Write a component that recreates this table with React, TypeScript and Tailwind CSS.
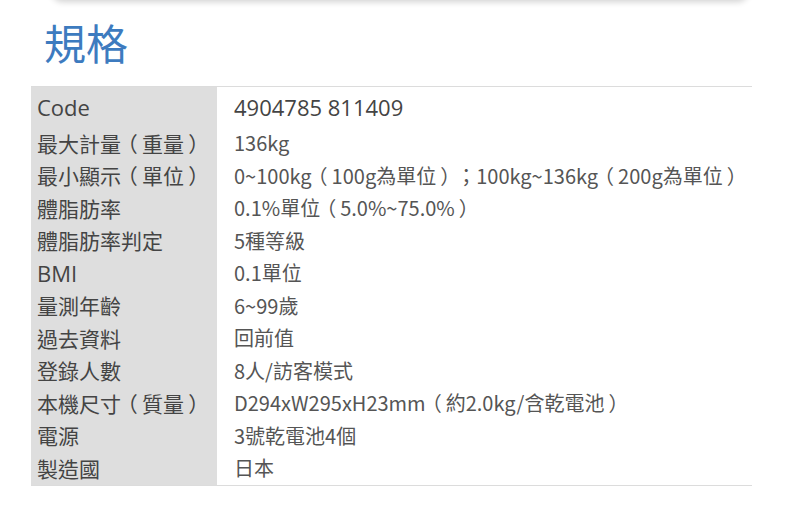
const specs: [string, string][] = [
  ["最大計量（重量）", "136kg"],
  ["最小顯示（單位）", "0~100kg（100g為單位）；100kg~136kg（200g為單位）"],
  ["體脂肪率", "0.1%單位（5.0%~75.0%）"],
  ["體脂肪率判定", "5種等級"],
  ["BMI", "0.1單位"],
  ["量測年齡", "6~99歲"],
  ["過去資料", "回前值"],
  ["登錄人數", "8人/訪客模式"],
  ["本機尺寸（質量）", "D294xW295xH23mm（約2.0kg/含乾電池）"],
  ["電源", "3號乾電池4個"],
  ["製造國", "日本"],
];

const font = "font-['Open_Sans','Noto_Sans_CJK_TC',sans-serif]";
const cjk = "font-['Noto_Sans_CJK_TC','Noto_Sans',sans-serif]";

// 全形括號置中：用半形字寬(halt)再補左右邊距
const Text = ({ s }: { s: string }) => (
  <>
    {s.split(/([（）])/).map((part, i) =>
      part === "（" ? (
        <span key={i} className="[font-feature-settings:'halt'] ml-[0.3em] mr-[0.2em]">（</span>
      ) : part === "）" ? (
        <span key={i} className="[font-feature-settings:'halt'] ml-[0.2em] mr-[0.3em]">）</span>
      ) : (
        part
      )
    )}
  </>
);

export default function App() {
  return (
    <div className="w-[800px] h-[522px] bg-white overflow-hidden [text-spacing-trim:space-all]">
      {/* 上一張卡片的底邊 */}
      <div className="mx-[51px] -mt-[20px] h-[20px] rounded-b-xl bg-white shadow-[0_2px_6px_rgba(0,0,0,0.18)]" />

      <h2 className={`${cjk} mt-[21px] pl-[44px] text-[42px] leading-[42px] text-[#3d7bbf]`}>
        規格
      </h2>

      <div className="mt-[23px] ml-[31px] w-[721px] border-t border-b border-[#dcdcdc]">
        <div className="flex h-[40px] items-center">
          <div className={`${font} w-[186px] h-full flex items-center bg-[#dedede] pl-[6px] text-[22px] text-[#444]`}>
            Code
          </div>
          <div className={`${font} pl-[17px] text-[22px] text-[#444]`}>4904785 811409</div>
        </div>
        {specs.map(([label, value]) => (
          <div key={label} className="flex h-[32.5px] items-center">
            <div
              className={`${label === "BMI" ? font + " text-[22px]" : cjk + " text-[21px]"} w-[186px] h-full flex items-center bg-[#dedede] pl-[6px] text-[#444] whitespace-nowrap`}
            >
              <Text s={label} />
            </div>
            <div className={`${cjk} pl-[17px] text-[20px] text-[#555] whitespace-nowrap`}>
              <Text s={value} />
            </div>
          </div>
        ))}
      </div>
    </div>
  );
}
